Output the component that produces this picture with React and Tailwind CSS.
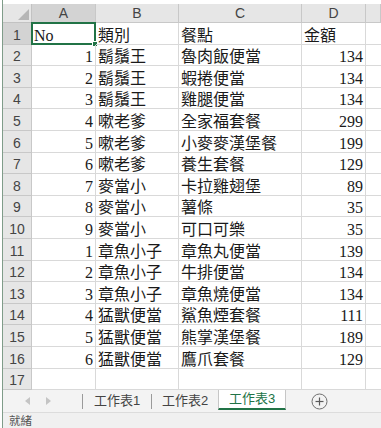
import React from "react";

const data = [
  ["No", "類別", "餐點", "金額"],
  [1, "鬍鬚王", "魯肉飯便當", 134],
  [2, "鬍鬚王", "蝦捲便當", 134],
  [3, "鬍鬚王", "雞腿便當", 134],
  [4, "嗽老爹", "全家福套餐", 299],
  [5, "嗽老爹", "小麥麥漢堡餐", 199],
  [6, "嗽老爹", "養生套餐", 129],
  [7, "麥當小", "卡拉雞翅堡", 89],
  [8, "麥當小", "薯條", 35],
  [9, "麥當小", "可口可樂", 35],
  [1, "章魚小子", "章魚丸便當", 139],
  [2, "章魚小子", "牛排便當", 134],
  [3, "章魚小子", "章魚燒便當", 134],
  [4, "猛獸便當", "鯊魚煙套餐", 111],
  [5, "猛獸便當", "熊掌漢堡餐", 189],
  [6, "猛獸便當", "鷹爪套餐", 129],
  ["", "", "", ""],
];

const cellFont =
  "font-['Liberation_Serif','Noto_Sans_CJK_TC',serif] text-[16px] leading-[16px] text-[#1a1a1a]";
const headFont = "font-['Liberation_Sans',Arial,sans-serif] text-[14px] text-[#444]";

function Cell({ value, first, sel }) {
  const isNum = typeof value === "number";
  return (
    <div
      className={`relative flex items-end border-r border-b border-[#d9d9d9] ${
        isNum ? "justify-end pr-[2px]" : "justify-start pl-[2px]"
      } ${cellFont}`}
    >
      <span className="whitespace-nowrap">{value}</span>
      {sel && (
        <div className="absolute left-[-1px] top-[-1px] right-[-1px] bottom-[-1px] border-2 border-[#217346]">
          <div className="absolute right-[-4px] bottom-[-4px] w-[6px] h-[6px] bg-[#217346] border border-white" />
        </div>
      )}
    </div>
  );
}

export default function App() {
  return (
    <div className="w-[381px] h-[428px] overflow-hidden bg-white pl-[2px]">
      <div className="h-full flex flex-col border-l border-[#7f9c89]">
        <div className="h-[4px] shrink-0 bg-white" />
        <div className="grid grid-cols-[29px_64px_83px_123px_64px_1fr] grid-rows-[19px_repeat(17,21.6px)] shrink-0">
          {/* corner */}
          <div className="relative bg-[#e6e6e6] border-r border-b border-[#c2c2c2]">
            <svg className="absolute right-[2px] bottom-[2px]" width="11" height="11" viewBox="0 0 11 11">
              <polygon points="11,0 11,11 0,11" fill="#b6b6b6" />
            </svg>
          </div>
          {["A", "B", "C", "D", ""].map((c, i) => (
            <div
              key={c + i}
              className={`flex items-center justify-center border-r border-b border-[#c8c8c8] ${headFont} ${
                i === 0 ? "bg-[#d3d3d3] text-[#3d5c47]" : "bg-[#e6e6e6]"
              }`}
            >
              {c}
            </div>
          ))}
          {data.map((row, r) => (
            <React.Fragment key={r}>
              <div
                className={`flex items-end justify-center leading-[17px] border-r border-b border-[#c8c8c8] ${headFont} ${
                  r === 0 ? "bg-[#d3d3d3] text-[#3d6b4c]" : "bg-[#e6e6e6]"
                }`}
              >
                {r + 1}
              </div>
              {row.map((v, c) => (
                <Cell key={c} value={v} sel={r === 0 && c === 0} />
              ))}
              <div className="border-b border-[#d9d9d9]" />
            </React.Fragment>
          ))}
        </div>
        {/* tab strip */}
        <div className="h-[22px] shrink-0 flex items-stretch bg-[#f3f3f3] font-['Liberation_Sans','Noto_Sans_CJK_TC',sans-serif] text-[13px]">
          <div className="w-[79px] flex items-center pl-[22px] gap-[16px]">
            <svg width="5" height="8" viewBox="0 0 5 8">
              <polygon points="5,0 5,8 0,4" fill="#c4c4c4" />
            </svg>
            <svg width="5" height="8" viewBox="0 0 5 8">
              <polygon points="0,0 0,8 5,4" fill="#c4c4c4" />
            </svg>
          </div>
          <div className="w-[1px] h-[15px] self-center bg-[#9a9a9a]" />
          <div className="w-[68px] flex items-center justify-center text-[#444]">工作表1</div>
          <div className="w-[1px] h-[15px] self-center bg-[#9a9a9a]" />
          <div className="w-[66px] flex items-center justify-center text-[#444]">工作表2</div>
          <div className="w-[68px] mb-[2px] flex items-center justify-center bg-white border-l border-r border-[#c6c6c6] border-b-2 border-b-[#217346] text-[#217346]">
            工作表3
          </div>
          <div className="flex items-center pl-[25px]">
            <svg width="17" height="17" viewBox="0 0 17 17">
              <circle cx="8.5" cy="8.5" r="7.5" fill="none" stroke="#6f6f6f" strokeWidth="1" />
              <line x1="8.5" y1="4.5" x2="8.5" y2="12.5" stroke="#5a5a5a" strokeWidth="1.2" />
              <line x1="4.5" y1="8.5" x2="12.5" y2="8.5" stroke="#5a5a5a" strokeWidth="1.2" />
            </svg>
          </div>
        </div>
        {/* status bar */}
        <div className="flex-1 flex items-end bg-[#f0f0f0] border-t border-[#dcdcdc] pl-[6px] font-['Noto_Sans_CJK_TC',sans-serif] text-[11.5px] leading-[15px] text-[#555]">
          就緒
        </div>
      </div>
    </div>
  );
}
